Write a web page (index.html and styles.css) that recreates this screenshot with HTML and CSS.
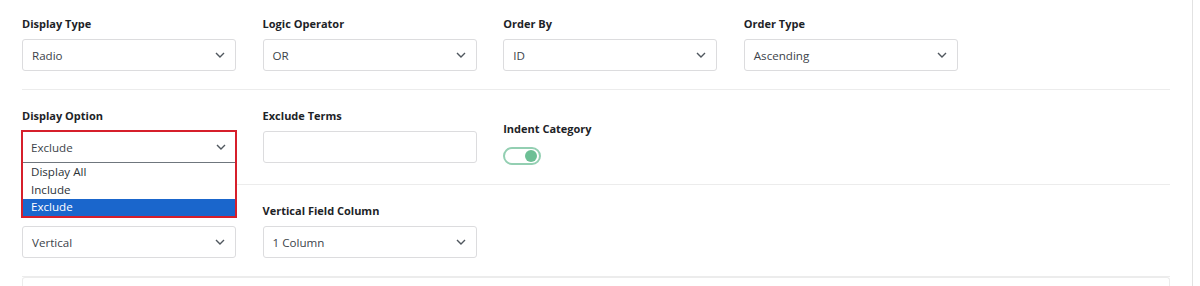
FILE: index.html
```html
<!DOCTYPE html>
<html lang="en">
<head>
  <meta charset="UTF-8" />
  <meta name="viewport" content="width=device-width, initial-scale=1.0" />
  <title>Filter Settings</title>
  <link rel="stylesheet" href="styles.css">
</head>
<body>
  <div class="page">
    <div class="panel">
      <div class="row">
        <div class="field">
          <label class="field-label">Display Type</label>
          <div class="select"><span>Radio</span><svg class="chevron" width="10" height="6" viewBox="0 0 10 6"><path d="M1 1l4 4 4-4" /></svg></div>
        </div>
        <div class="field">
          <label class="field-label">Logic Operator</label>
          <div class="select"><span>OR</span><svg class="chevron" width="10" height="6" viewBox="0 0 10 6"><path d="M1 1l4 4 4-4" /></svg></div>
        </div>
        <div class="field">
          <label class="field-label">Order By</label>
          <div class="select"><span>ID</span><svg class="chevron" width="10" height="6" viewBox="0 0 10 6"><path d="M1 1l4 4 4-4" /></svg></div>
        </div>
        <div class="field">
          <label class="field-label">Order Type</label>
          <div class="select"><span>Ascending</span><svg class="chevron" width="10" height="6" viewBox="0 0 10 6"><path d="M1 1l4 4 4-4" /></svg></div>
        </div>
      </div>

      <div class="row row-mid">
        <div class="field">
          <label class="field-label">Display Option</label>
          <div class="dropdown">
            <div class="select"><span>Exclude</span></div>
            <div class="dropdown-open">
              <div class="dropdown-head"><span>Exclude</span><svg class="chevron" width="10" height="6" viewBox="0 0 10 6"><path d="M1 1l4 4 4-4" /></svg></div>
              <ul class="options">
                <li>Display All</li>
                <li>Include</li>
                <li class="selected">Exclude</li>
              </ul>
            </div>
          </div>
        </div>
        <div class="field">
          <label class="field-label">Exclude Terms</label>
          <div class="text-input"></div>
        </div>
        <div class="field field-toggle">
          <label class="field-label">Indent Category</label>
          <div class="toggle"><span class="knob"></span></div>
        </div>
      </div>

      <div class="row">
        <div class="field">
          <label class="field-label">&nbsp;</label>
          <div class="select"><span>Vertical</span><svg class="chevron" width="10" height="6" viewBox="0 0 10 6"><path d="M1 1l4 4 4-4" /></svg></div>
        </div>
        <div class="field">
          <label class="field-label">Vertical Field Column</label>
          <div class="select"><span>1 Column</span><svg class="chevron" width="10" height="6" viewBox="0 0 10 6"><path d="M1 1l4 4 4-4" /></svg></div>
        </div>
      </div>

      <div class="box"></div>
    </div>
  </div>
</body>
</html>
```

FILE: styles.css
```css
:root {
  --label: #1d2327;
  --value: #3c434a;
  --border: #dcdcde;
  --line: #ececec;
  --accent: #6dbf95;
  --mark: #d61f2b;
}

* {
  box-sizing: border-box;
}

body {
  margin: 0;
  background-color: #fff;
  font-family: "Open Sans", "Noto Sans", sans-serif;
  color: var(--label);
}

.page {
  width: 1193px;
  height: 286px;
  border-right: 1px solid #e2e2e2;
  overflow: hidden;
}

.panel {
  margin-left: 22px;
  width: 1148px;
}

.row {
  display: grid;
  grid-template-columns: repeat(4, 214px);
  column-gap: 26.6px;
  padding: 17px 0 18px;
  border-bottom: 1px solid var(--line);
}

.row-mid {
  padding: 19px 0 19px;
}

.row-mid + .row {
  padding-top: 19px;
}

.field-label {
  display: block;
  height: 14px;
  margin-bottom: 8px;
  font-size: 11px;
  font-weight: 700;
  line-height: 14px;
  color: var(--label);
}

.select {
  display: flex;
  align-items: center;
  justify-content: space-between;
  height: 32px;
  padding: 0 10px 0 9px;
  border: 1px solid var(--border);
  border-radius: 3px;
  font-size: 11.6px;
  color: var(--value);
}

.chevron path {
  fill: none;
  stroke: #50575e;
  stroke-width: 1.4;
}

.text-input {
  height: 32px;
  border: 1px solid var(--border);
  border-radius: 3px;
}

.field-toggle {
  padding-top: 13px;
}

.field-toggle .field-label {
  margin-bottom: 11px;
}

.toggle {
  position: relative;
  width: 38px;
  height: 18px;
  border: 2px solid #93cfb2;
  border-radius: 9px;
  background-color: #fff;
}

.toggle .knob {
  position: absolute;
  top: 1px;
  right: 2px;
  width: 12px;
  height: 12px;
  border-radius: 50%;
  background-color: var(--accent);
}

/* open select, outlined in red */
.dropdown {
  position: relative;
}

.dropdown-open {
  position: absolute;
  top: -1px;
  left: -1px;
  right: -1px;
  z-index: 2;
  border: 2px solid var(--mark);
  background-color: #fff;
}

.dropdown-head {
  display: flex;
  align-items: center;
  justify-content: space-between;
  height: 31px;
  padding: 0 9px 0 8px;
  border-bottom: 1px solid #6f767d;
  font-size: 11.6px;
  color: var(--value);
}

.options {
  list-style: none;
  margin: 0;
  padding: 0;
}

.options li {
  height: 18px;
  padding-left: 8px;
  font-size: 11.6px;
  line-height: 17px;
  color: #2c3338;
}

.options li:last-child {
  height: 17px;
  line-height: 16px;
}

.options .selected {
  background-color: #1a66cc;
  color: #fff;
}

.box {
  height: 20px;
  border: 1px solid var(--line);
  border-bottom: none;
  border-radius: 3px 3px 0 0;
}
```
